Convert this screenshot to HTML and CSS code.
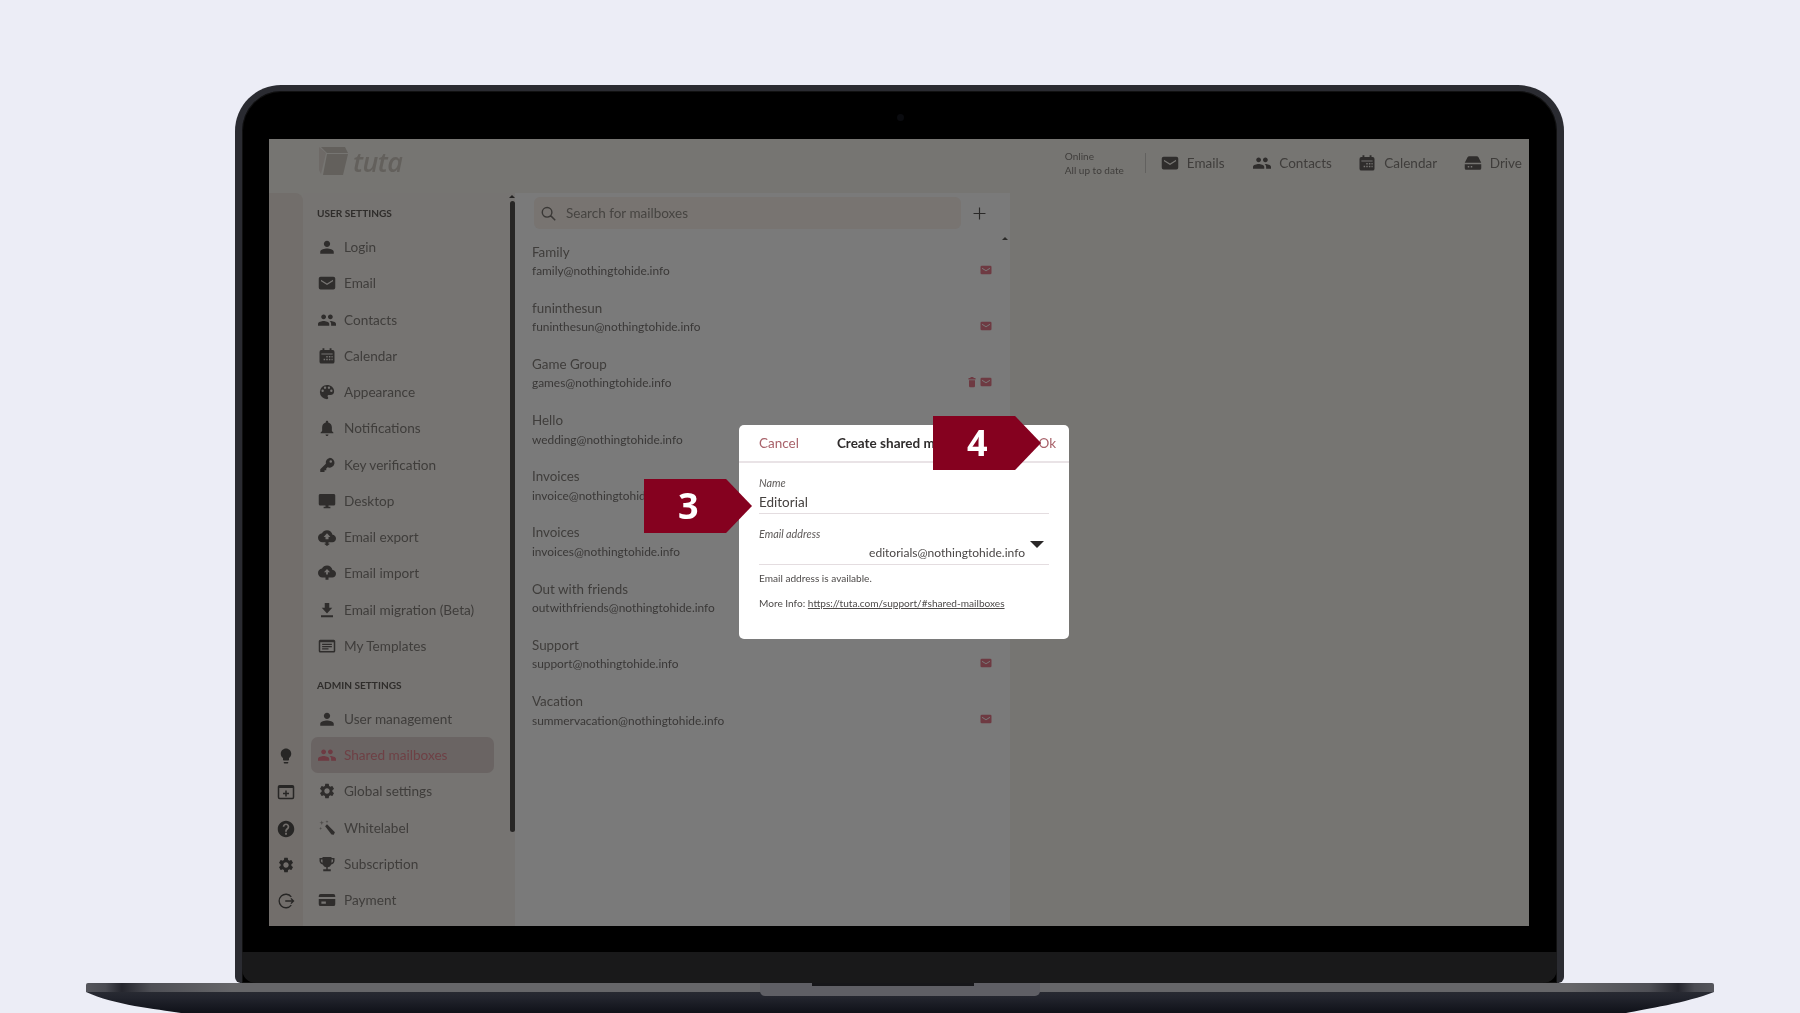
FILE: index.html
```html
<!DOCTYPE html>
<html lang="en">
<head>
<meta charset="utf-8">
<title>Create shared mailbox</title>
<link rel="stylesheet" href="styles.css">
</head>
<body>
<svg class="sprite" aria-hidden="true">
  <symbol id="i-person" viewBox="0 0 24 24"><path d="M12 12c2.400 0 4.200-1.900 4.200-4.200S14.400 3.500 12 3.500 7.800 5.400 7.800 7.800 9.600 12 12 12zm0 2c-3 0-9 1.400-9 4.200V21h18v-2.800c0-2.800-6-4.200-9-4.200z"/></symbol>
  <symbol id="i-mail" viewBox="0 0 24 24"><path fill-rule="evenodd" d="M3.500 3.500h17A2.500 2.500 0 0 1 23 6v12a2.500 2.500 0 0 1-2.500 2.500h-17A2.500 2.500 0 0 1 1 18V6a2.500 2.500 0 0 1 2.500-2.500zM4 7.500v2.200l8 5 8-5V7.500l-8 5z"/></symbol>
  <symbol id="i-people" viewBox="0 0 24 24"><path d="M16.500 11c1.800 0 3.200-1.500 3.200-3.300S18.300 4.500 16.500 4.500s-3.200 1.400-3.200 3.200 1.400 3.300 3.200 3.300zm-9 0c1.800 0 3.200-1.500 3.200-3.300S9.300 4.500 7.500 4.500 4.300 5.900 4.300 7.700 5.700 11 7.500 11zm0 2.200C5 13.200 0 14.400 0 17v2.500h15V17c0-2.600-5-3.800-7.500-3.800zm9 0c-.3 0-.7 0-1.100.1 1.300.9 2.100 2.100 2.100 3.700v2.500H24V17c0-2.600-5-3.800-7.500-3.800z"/></symbol>
  <symbol id="i-cal" viewBox="0 0 24 24"><path fill-rule="evenodd" d="M6 1.500h2.500V4h7V1.500H18V4h1.500A2.500 2.500 0 0 1 22 6.500v13a2.500 2.500 0 0 1-2.500 2.500h-15A2.500 2.500 0 0 1 2 19.500v-13A2.500 2.500 0 0 1 4.500 4H6zM4.500 8.500v1.500h15V8.500zM11 12v2h2v-2zm3.500 0v2h2v-2zm3.500 0v2h1.500v-2zM7.500 15.500v2h2v-2zm3.500 0v2h2v-2zm3.500 0v2h2v-2zM18 15.500v2h1.500v-2z"/></symbol>
  <symbol id="i-palette" viewBox="0 0 24 24"><path d="M12 2.500a9.500 9.500 0 0 0 0 19c.9 0 1.600-.7 1.600-1.600 0-.4-.2-.8-.4-1.100-.3-.3-.4-.7-.4-1.100 0-.9.700-1.600 1.600-1.600h1.900a5.300 5.300 0 0 0 5.200-5.300C21.500 6.100 17.200 2.500 12 2.500zM6.200 12a1.600 1.600 0 1 1 0-3.200 1.600 1.600 0 0 1 0 3.200zm3.200-4.200a1.600 1.600 0 1 1 0-3.200 1.600 1.600 0 0 1 0 3.200zm5.200 0a1.600 1.600 0 1 1 0-3.200 1.600 1.600 0 0 1 0 3.200zm3.200 4.200a1.600 1.600 0 1 1 0-3.200 1.600 1.600 0 0 1 0 3.200z"/></symbol>
  <symbol id="i-bell" viewBox="0 0 24 24"><path d="M12 22.500c1.100 0 2-.9 2-2h-4c0 1.100.9 2 2 2zm6.500-6.500v-5c0-3.100-1.700-5.700-4.900-6.400V4c0-.9-.7-1.600-1.600-1.600s-1.600.7-1.600 1.600v.6C7.200 5.300 5.500 7.900 5.500 11v5l-2 2v1h17v-1z"/></symbol>
  <symbol id="i-key" viewBox="0 0 24 24"><path fill-rule="evenodd" d="M15.500 2.500a6.500 6.500 0 1 1-2.700 12.400L11 16.700V19H8.700v2.300H3V17.800l7.500-7.500A6.500 6.500 0 0 1 15.500 2.500zM17 5.500a1.700 1.700 0 1 0 0 3.400 1.700 1.700 0 0 0 0-3.400z"/></symbol>
  <symbol id="i-desktop" viewBox="0 0 24 24"><path d="M21 2.500H3c-1.100 0-2 .9-2 2v11.500c0 1.100.9 2 2 2h7v1.500H7.500v2h9v-2H14V18h7c1.100 0 2-.9 2-2V4.500c0-1.100-.9-2-2-2z"/></symbol>
  <symbol id="i-cdown" viewBox="0 0 24 24"><path d="M19.350 9.040C18.670 5.590 15.640 3 12 3 9.110 3 6.600 4.640 5.350 7.040 2.340 7.360 0 9.910 0 13c0 3.310 2.690 6 6 6h4v2H8l4 3 4-3h-2v-2h5c2.760 0 5-2.240 5-5 0-2.640-2.050-4.780-4.650-4.960zM14 12v3h-4v-3H7.500L12 7l4.500 5z"/></symbol>
  <symbol id="i-cup" viewBox="0 0 24 24"><path d="M19.350 8.040C18.670 4.590 15.640 2 12 2 9.110 2 6.600 3.640 5.350 6.040 2.340 6.360 0 8.910 0 12c0 3.310 2.690 6 6 6h4v3h4v-3h5c2.760 0 5-2.240 5-5 0-2.640-2.050-4.780-4.650-4.960zM10.800 14v-3H8l4-4.500 4 4.500h-2.800v3z"/></symbol>
  <symbol id="i-dl" viewBox="0 0 24 24"><path d="M19 9h-4V2.500H9V9H5l7 7.500zM4 19v2.500h16V19z"/></symbol>
  <symbol id="i-tpl" viewBox="0 0 24 24"><path fill-rule="evenodd" d="M3 3.500h18A2 2 0 0 1 23 5.500v13a2 2 0 0 1-2 2H3a2 2 0 0 1-2-2v-13a2 2 0 0 1 2-2zm0 3.500v11.500h18V7zm2.500 2h13v1.500h-13zm0 3h13v1.500h-13zm0 3H14v1.500H5.500z"/></symbol>
  <symbol id="i-gear" viewBox="0 0 24 24"><path d="M19.140 12.940c.04-.3.060-.61.060-.94 0-.32-.02-.64-.07-.94l2.030-1.580a.49.49 0 0 0 .12-.61l-1.920-3.320a.488.488 0 0 0-.59-.22l-2.390.96c-.5-.38-1.030-.7-1.620-.94l-.36-2.540a.484.484 0 0 0-.48-.41h-3.840c-.24 0-.43.17-.47.41l-.36 2.540c-.59.24-1.130.57-1.620.94l-2.390-.96c-.22-.08-.47 0-.59.22L2.740 8.870c-.12.21-.08.47.12.61l2.030 1.580c-.05.3-.09.63-.09.94s.02.64.07.94l-2.030 1.580a.49.49 0 0 0-.12.61l1.920 3.320c.12.22.37.29.59.22l2.390-.96c.5.38 1.030.7 1.620.94l.36 2.540c.05.24.24.41.48.41h3.840c.24 0 .44-.17.47-.41l.36-2.540c.59-.24 1.130-.56 1.620-.94l2.390.96c.22.08.47 0 .59-.22l1.920-3.320c.12-.22.07-.47-.12-.61l-2.010-1.580zM12 15.600c-1.980 0-3.600-1.620-3.600-3.600s1.620-3.600 3.600-3.600 3.600 1.620 3.600 3.600-1.620 3.600-3.600 3.600z"/></symbol>
  <symbol id="i-wand" viewBox="0 0 24 24"><path d="M9.500 9.500l2.500-2.500 10.500 10.500-1.500 3.500-3-.5z"/><path d="M5 2l.8 2.200L8 5l-2.200.8L5 8l-.8-2.200L2 5l2.200-.8zM12 1.500l.6 1.400 1.400.6-1.400.6-.6 1.400-.6-1.400L10 3.500l1.400-.6zM3.500 10.500l.6 1.400 1.400.6-1.400.6-.6 1.400-.6-1.400-1.400-.6 1.400-.6z" opacity=".55"/></symbol>
  <symbol id="i-trophy" viewBox="0 0 24 24"><path fill-rule="evenodd" d="M6 2.500h12V4h4v3.500c0 2.600-1.800 4.600-4.300 5A6 6 0 0 1 13 16.300V19h4v2.500H7V19h4v-2.700a6 6 0 0 1-4.700-3.800C3.800 12.100 2 10.100 2 7.500V4h4zM4 6v1.500c0 1.200.8 2.300 2 2.700V6zm16 0h-2v4.200c1.200-.4 2-1.500 2-2.700z"/></symbol>
  <symbol id="i-card" viewBox="0 0 24 24"><path fill-rule="evenodd" d="M3.500 4h17A2.500 2.500 0 0 1 23 6.500v11a2.500 2.500 0 0 1-2.500 2.500h-17A2.500 2.500 0 0 1 1 17.500v-11A2.500 2.500 0 0 1 3.500 4zM1 8v2.500h22V8zm3.500 6v3h6v-3z"/></symbol>
  <symbol id="i-bulb" viewBox="0 0 24 24"><path d="M9 21c0 .55.45 1 1 1h4c.55 0 1-.45 1-1v-1H9zm3-19C8.140 2 5 5.140 5 9c0 2.380 1.190 4.470 3 5.740V17c0 .55.45 1 1 1h6c.55 0 1-.45 1-1v-2.260c1.810-1.270 3-3.360 3-5.740 0-3.860-3.140-7-7-7z"/></symbol>
  <symbol id="i-winplus" viewBox="0 0 24 24"><path fill-rule="evenodd" d="M3.500 2.500h17A2.500 2.500 0 0 1 23 5v14a2.500 2.500 0 0 1-2.500 2.500h-17A2.500 2.500 0 0 1 1 19V5a2.500 2.500 0 0 1 2.500-2.500zM3 6.500V19a.5.5 0 0 0 .5.500h17a.5.5 0 0 0 .5-.5V6.500zm8 3.500h2v3h3v2h-3v3h-2v-3H8v-2h3z"/></symbol>
  <symbol id="i-help" viewBox="0 0 24 24"><path d="M12 1C5.930 1 1 5.930 1 12s4.930 11 11 11 11-4.930 11-11S18.070 1 12 1zm1.200 18.500h-2.400v-2.400h2.400zm2.300-8l-1 1c-1 1-1.300 1.700-1.300 3h-2.400v-.6c0-1.200.5-2.300 1.300-3.100l1.400-1.400c.4-.4.6-.9.6-1.500 0-1.200-1-2.200-2.100-2.200S9.900 7.700 9.900 8.900H7.600C7.600 6.400 9.500 4.500 12 4.500s4.400 1.900 4.400 4.400c0 1-.4 1.900-.9 2.600z"/></symbol>
  <symbol id="i-logout" viewBox="0 0 24 24"><path fill="none" stroke="currentColor" stroke-width="1.800" d="M19 6.500A9 9 0 1 0 19 17.500M11 12h11M18.500 8.500L22 12l-3.500 3.500"/></symbol>
  <symbol id="i-drive" viewBox="0 0 24 24"><path fill-rule="evenodd" d="M7 3h10c1 0 1.800.5 2.300 1.400L23 11.500H1l3.700-7.100C5.200 3.500 6 3 7 3zM1 13.500h22V19a2 2 0 0 1-2 2H3a2 2 0 0 1-2-2zM5 16v2h2v-2zm4 0v2h2v-2z"/></symbol>
  <symbol id="i-trash" viewBox="0 0 24 24"><path d="M9 2h6v2h4v3H5V4h4zM6 8.500h12V20a2.500 2.500 0 0 1-2.500 2.500h-7A2.500 2.500 0 0 1 6 20z"/></symbol>
  <symbol id="i-search" viewBox="0 0 24 24"><path fill="none" stroke="currentColor" stroke-width="2" d="M10 3.500a6.800 6.800 0 1 1 0 13.600 6.800 6.800 0 0 1 0-13.600zM15 15l6.500 6.500"/></symbol>
  <symbol id="i-plus" viewBox="0 0 24 24"><path fill="none" stroke="currentColor" stroke-width="2.100" d="M12 1v22M1 12h22"/></symbol>
</svg>

<main class="stage">
  <section class="lid">
    <div class="camera"></div>
    <div class="screen">
      <header class="topbar">
        <div class="logo">
          <svg class="logo-box" viewBox="0 0 30 30"><path class="logo-side" d="M1 1l7 6-5 21-2-4z"/><path d="M3 1h24l3 6H9zM9 8h21l-5 21H5z"/></svg>
          <span class="logo-word">tuta</span>
        </div>
        <div class="status"><span>Online</span><span>All up to date</span></div>
        <nav class="appnav">
          <a class="appnav-item appnav-emails"><svg class="ico"><use href="#i-mail"/></svg>Emails</a>
          <a class="appnav-item appnav-contacts"><svg class="ico"><use href="#i-people"/></svg>Contacts</a>
          <a class="appnav-item appnav-cal"><svg class="ico"><use href="#i-cal"/></svg>Calendar</a>
          <a class="appnav-item"><svg class="ico"><use href="#i-drive"/></svg>Drive</a>
        </nav>
      </header>
      <div class="body">
        <aside class="rail">
          <svg class="ico"><use href="#i-bulb"/></svg>
          <svg class="ico"><use href="#i-winplus"/></svg>
          <svg class="ico"><use href="#i-help"/></svg>
          <svg class="ico"><use href="#i-gear"/></svg>
          <svg class="ico"><use href="#i-logout"/></svg>
        </aside>
        <nav class="settings">
          <h2 class="sec">USER SETTINGS</h2>
          <a class="row"><svg class="ico"><use href="#i-person"/></svg>Login</a>
          <a class="row"><svg class="ico"><use href="#i-mail"/></svg>Email</a>
          <a class="row"><svg class="ico"><use href="#i-people"/></svg>Contacts</a>
          <a class="row"><svg class="ico"><use href="#i-cal"/></svg>Calendar</a>
          <a class="row"><svg class="ico"><use href="#i-palette"/></svg>Appearance</a>
          <a class="row"><svg class="ico"><use href="#i-bell"/></svg>Notifications</a>
          <a class="row"><svg class="ico"><use href="#i-key"/></svg>Key verification</a>
          <a class="row"><svg class="ico"><use href="#i-desktop"/></svg>Desktop</a>
          <a class="row"><svg class="ico"><use href="#i-cdown"/></svg>Email export</a>
          <a class="row"><svg class="ico"><use href="#i-cup"/></svg>Email import</a>
          <a class="row"><svg class="ico"><use href="#i-dl"/></svg>Email migration (Beta)</a>
          <a class="row"><svg class="ico"><use href="#i-tpl"/></svg>My Templates</a>
          <h2 class="sec sec-admin">ADMIN SETTINGS</h2>
          <a class="row"><svg class="ico"><use href="#i-person"/></svg>User management</a>
          <a class="row row-active"><svg class="ico"><use href="#i-people"/></svg>Shared mailboxes</a>
          <a class="row"><svg class="ico"><use href="#i-gear"/></svg>Global settings</a>
          <a class="row"><svg class="ico"><use href="#i-wand"/></svg>Whitelabel</a>
          <a class="row"><svg class="ico"><use href="#i-trophy"/></svg>Subscription</a>
          <a class="row"><svg class="ico"><use href="#i-card"/></svg>Payment</a>
        </nav>
        <div class="scroll"><span class="scroll-up"></span><span class="scroll-thumb"></span></div>
        <section class="list">
          <div class="searchrow">
            <div class="search"><svg class="ico"><use href="#i-search"/></svg>Search for mailboxes</div>
            <svg class="plus"><use href="#i-plus"/></svg>
          </div>
          <span class="list-up"></span>
          <div class="items">
            <div class="item"><div class="item-text"><b>Family</b><span>family@nothingtohide.info</span></div><div class="flags"><svg><use href="#i-mail"/></svg></div></div>
            <div class="item"><div class="item-text"><b>funinthesun</b><span>funinthesun@nothingtohide.info</span></div><div class="flags"><svg><use href="#i-mail"/></svg></div></div>
            <div class="item"><div class="item-text"><b>Game Group</b><span>games@nothingtohide.info</span></div><div class="flags"><svg><use href="#i-trash"/></svg><svg><use href="#i-mail"/></svg></div></div>
            <div class="item"><div class="item-text"><b>Hello</b><span>wedding@nothingtohide.info</span></div></div>
            <div class="item"><div class="item-text"><b>Invoices</b><span>invoice@nothingtohide.info</span></div></div>
            <div class="item"><div class="item-text"><b>Invoices</b><span>invoices@nothingtohide.info</span></div></div>
            <div class="item"><div class="item-text"><b>Out with friends</b><span>outwithfriends@nothingtohide.info</span></div></div>
            <div class="item"><div class="item-text"><b>Support</b><span>support@nothingtohide.info</span></div><div class="flags"><svg><use href="#i-mail"/></svg></div></div>
            <div class="item"><div class="item-text"><b>Vacation</b><span>summervacation@nothingtohide.info</span></div><div class="flags"><svg><use href="#i-mail"/></svg></div></div>
          </div>
        </section>
        <div class="blank"></div>
      </div>

      <div class="dialog">
        <div class="dialog-head">
          <span class="dlg-btn">Cancel</span>
          <span class="dlg-title">Create shared mailbox</span>
          <span class="dlg-btn dlg-ok">Ok</span>
        </div>
        <div class="dialog-body">
          <div class="field">
            <span class="label">Name</span>
            <span class="value">Editorial</span>
          </div>
          <div class="field field-mail">
            <span class="label">Email address</span>
            <div class="select"><span class="select-val">editorials@nothingtohide.info</span><span class="caret"></span></div>
          </div>
          <p class="hint">Email address is available.</p>
          <p class="hint hint-more">More Info: <a class="link">https://tuta.com/support/#shared-mailboxes</a></p>
        </div>
      </div>
      <div class="callout callout-3">3</div>
      <div class="callout callout-4">4</div>
    </div>
    <div class="chin"></div>
  </section>
  <svg class="base" viewBox="0 0 1628 30" aria-hidden="true">
    <defs>
      <linearGradient id="band" x1="0" x2="1" y1="0" y2="0">
        <stop offset="0" stop-color="#55565c"/>
        <stop offset=".012" stop-color="#4a4b52"/>
        <stop offset=".022" stop-color="#25262e"/>
        <stop offset=".04" stop-color="#4e4f55"/>
        <stop offset=".09" stop-color="#666669"/>
        <stop offset=".91" stop-color="#666669"/>
        <stop offset=".96" stop-color="#4e4f55"/>
        <stop offset=".978" stop-color="#25262e"/>
        <stop offset=".988" stop-color="#4a4b52"/>
        <stop offset="1" stop-color="#55565c"/>
      </linearGradient>
      <linearGradient id="under" x1="0" x2="0" y1="0" y2="1">
        <stop offset="0" stop-color="#282a32"/>
        <stop offset=".25" stop-color="#23252e"/>
        <stop offset="1" stop-color="#0f1118"/>
      </linearGradient>
    </defs>
    <path fill="url(#under)" d="M0 9H1628C1600 20 1560 26 1540 30H95C70 26 28 22 0 9z"/>
    <path fill="url(#band)" d="M2 0H1626a2 2 0 0 1 2 2V9H0V2a2 2 0 0 1 2-2z"/>
    <path fill="#5f5f65" d="M674 0H954V8a5 5 0 0 1-5 5H679a5 5 0 0 1-5-5z"/>
    <path fill="#17171a" d="M726 0H888V3H726z"/>
  </svg>
</main>
</body>
</html>
```

FILE: styles.css
```css
* { box-sizing: border-box; }
html, body { margin: 0; height: 100%; }
body {
  background: #ecedf6;
  font-family: "Lato", "Liberation Sans", sans-serif;
  overflow: hidden;
}
.sprite { display: none; }
.stage {
  display: flex;
  flex-direction: column;
  align-items: center;
  padding-top: 85px;
  height: 1013px;
}
.lid {
  position: relative;
  width: 1329px;
  height: 898px;
  margin-right: 1px;
  background: #000;
  border: solid #2a2b31;
  border-width: 6px 7px 0 7px;
  border-radius: 46px 46px 6px 6px;
  padding: 48px 27px 0;
  display: flex;
  flex-direction: column;
  box-shadow: inset 0 0 0 1px #111;
}
.camera {
  position: absolute;
  left: 655px;
  top: 23px;
  width: 7px;
  height: 7px;
  border-radius: 50%;
  background: #0a0b0f;
}
.screen {
  position: relative;
  width: 1260px;
  height: 787px;
  flex: none;
  background: #767572;
  color: #3f3d3b;
  filter: blur(.4px);
  display: flex;
  flex-direction: column;
  overflow: hidden;
  font-size: 13.600px;
}
.chin {
  margin: 26px -27px 0;
  flex: 1;
  background: #19191a;
  border-radius: 0 0 14px 14px;
}
.ico { width: 18px; height: 18px; fill: currentColor; color: #2f2d2c; flex: none; display: block; }

/* top bar */
.topbar { height: 54px; flex: none; display: flex; align-items: flex-start; padding-left: 49px; }
.logo { display: flex; align-items: center; gap: 5px; height: 30px; margin-top: 7px; color: #63605c; }
.logo-box { width: 30px; height: 30px; fill: #63605c; }
.logo-side { fill: #6e6a67; }
.logo-word { font: italic 600 27px/1 "Open Sans", sans-serif; letter-spacing: -.6px; }
.status {
  margin-left: auto;
  width: 81px;
  display: flex;
  flex-direction: column;
  justify-content: center;
  gap: 3px;
  font-size: 10px;
  line-height: 11px;
  border-right: 1px solid #62615f;
  height: 20px;
  margin-top: 14px;
}
.appnav { display: flex; margin-top: 15px; padding-right: 7px; margin-left: 15px; }
.appnav-item { display: flex; align-items: center; gap: 8px; height: 18px; font-size: 13.500px; }
.appnav-emails { width: 92.500px; }
.appnav-contacts { width: 105px; }
.appnav-cal { width: 105.500px; }

/* body */
.body { flex: 1; display: flex; min-height: 0; }
.rail {
  width: 34px;
  flex: none;
  background: #726e6b;
  border-radius: 0 8px 0 0;
  display: flex;
  flex-direction: column;
  align-items: center;
  justify-content: flex-end;
  gap: 18.250px;
  padding-bottom: 16px;
}
.rail .ico { color: #272625; }
.settings {
  width: 206px;
  flex: none;
  background: #767472;
  padding: 0 15px 0 8px;
  display: flex;
  flex-direction: column;
}
.sec {
  margin: 12.500px 0 9.500px 6px;
  font-size: 10.100px;
  line-height: 14px;
  font-weight: 700;
  color: #2f2d2b;
  white-space: nowrap;
}
.sec-admin { margin-top: 13.500px; margin-bottom: 9.250px; }
.row {
  height: 36.250px;
  flex: none;
  display: flex;
  align-items: center;
  gap: 8px;
  padding-left: 7px;
  border-radius: 7px;
  font-size: 13.600px;
  white-space: nowrap;
}
.row-active { background: #6a6463; color: #6e4045; }
.row-active .ico { color: #6e3a42; }
.scroll { width: 6px; flex: none; background: #767472; display: flex; flex-direction: column; align-items: center; padding-top: 2px; gap: 3px; }
.scroll-up { width: 0; height: 0; border: 3px solid transparent; border-top: 0; border-bottom: 3px solid #242322; }
.scroll-thumb { width: 5px; height: 631px; background: #272625; border-radius: 3px; }
.list { width: 495px; flex: none; background: #7a7a7a; padding: 4px 0 0 17px; position: relative; }
.searchrow { display: flex; align-items: center; height: 32px; margin-left: 2px; }
.search {
  width: 427px;
  height: 32px;
  background: #787471;
  border-radius: 6px;
  display: flex;
  align-items: center;
  gap: 9px;
  padding-left: 5px;
  font-size: 13.500px;
  color: #464441;
}
.search .ico { width: 17px; height: 17px; color: #3a3836; margin-left: 1px; }
.plus { width: 13px; height: 13px; margin-left: 12px; color: #2a2928; }
.list-up { position: absolute; right: 2px; top: 44px; width: 0; height: 0; border: 3px solid transparent; border-top: 0; border-bottom: 3px solid #2b2a29; }
.items { padding-top: 12.500px; }
.item { height: 56.200px; display: flex; align-items: flex-start; padding-right: 18px; }
.item-text { flex: 1; display: flex; flex-direction: column; min-width: 0; }
.item-text b { font-weight: 400; font-size: 13.400px; line-height: 20.500px; }
.item-text span { font-size: 11.900px; line-height: 18px; color: #3a3837; }
.flags { display: flex; gap: 2px; margin-top: 22px; fill: #6e3a42; }
.flags svg { width: 12px; height: 12px; display: block; }

.blank { flex: 1; }

/* dialog */
.dialog {
  position: absolute;
  left: 470px;
  top: 286px;
  width: 330px;
  height: 214px;
  background: #fff;
  border-radius: 5px;
  color: #4a4645;
  display: flex;
  flex-direction: column;
}
.dialog-head {
  height: 38px;
  flex: none;
  border-bottom: 2px solid #e9e3e6;
  display: flex;
  align-items: center;
  padding: 0 13px 0 20px;
  font-size: 13.500px;
}
.dlg-btn { color: #a8626a; }
.dlg-title { margin-left: 38px; font-weight: 700; color: #2f2c2c; white-space: nowrap; }
.dlg-ok { margin-left: auto; }
.dialog-body { padding: 13px 20px 0; font-size: 10px; }
.field { display: flex; flex-direction: column; border-bottom: 1px solid #e4dde0; }
.label { font-style: italic; font-size: 10.800px; line-height: 14px; color: #5c5857; }
.value { font-size: 13.500px; line-height: 18px; height: 23px; padding-top: 3px; color: #45413f; }
.field-mail { margin-top: 13px; height: 38px; }
.select { display: flex; justify-content: flex-end; align-items: flex-start; }
.select-val { font-size: 12.050px; line-height: 16px; margin-top: 4px; }
.caret { width: 0; height: 0; margin: 0 5px 0 5px; border: solid transparent; border-width: 7px 7px 0; border-top-color: #2a2828; }
.hint { margin: 6.500px 0 0; font-size: 10.100px; line-height: 12px; color: #4d4a49; }
.hint-more { margin-top: 13.500px; }
.link { text-decoration: underline; }

/* callouts */
.callout {
  position: absolute;
  background: #85011f;
  color: #fff;
  height: 54px;
  font: 700 36px/54px "Open Sans", sans-serif;
  clip-path: polygon(0 0, 76% 0, 100% 50%, 76% 100%, 0 100%);
  width: 108px;
  padding-left: 34px;
}
.callout-3 { left: 375px; top: 340px; }
.callout-4 { left: 664px; top: 277px; }

.base { display: block; width: 1628px; height: 30px; flex: none; }
```
